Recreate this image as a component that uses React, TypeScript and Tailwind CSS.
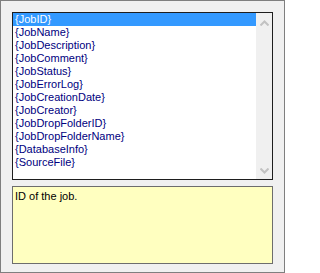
import React from "react";

const fields = [
  "{JobID}",
  "{JobName}",
  "{JobDescription}",
  "{JobComment}",
  "{JobStatus}",
  "{JobErrorLog}",
  "{JobCreationDate}",
  "{JobCreator}",
  "{JobDropFolderID}",
  "{JobDropFolderName}",
  "{DatabaseInfo}",
  "{SourceFile}",
];

const Chevron = ({ up }: { up?: boolean }) => (
  <svg width="9" height="6" viewBox="0 0 9 6" className="block">
    <path
      d={up ? "M0.5 5.5 L4.5 1.5 L8.5 5.5" : "M0.5 0.5 L4.5 4.5 L8.5 0.5"}
      fill="none"
      stroke="#c2c2c2"
      strokeWidth="2"
    />
  </svg>
);

const App = () => {
  return (
    <div
      className="w-[285px] h-[273px] border border-[#7f7f7f] bg-[#f0f0f0] pt-[11px] px-[11px] flex flex-col gap-[6px] text-[11px] leading-[13px]"
      style={{ fontFamily: '"Liberation Sans", Arial, sans-serif' }}
    >
      <div className="h-[168px] border border-[#1e1e1e] bg-white flex">
        <div className="flex-1 flex flex-col">
          {fields.map((f, i) => (
            <div
              key={f}
              className={
                i === 0
                  ? "h-[13px] pl-[2px] bg-[#3399ff] text-white"
                  : "h-[13px] pl-[2px] text-[#000080]"
              }
            >
              {f}
            </div>
          ))}
        </div>
        <div className="w-[16px] bg-[#f0f0f0] flex flex-col items-center justify-between pt-[7px] pb-[5px]">
          <Chevron up />
          <Chevron />
        </div>
      </div>
      <div className="h-[78px] border border-[#6d6d6d] bg-[#ffffc0] px-[2px] pt-[3px] text-black">
        ID of the job.
      </div>
    </div>
  );
};

export default App;
